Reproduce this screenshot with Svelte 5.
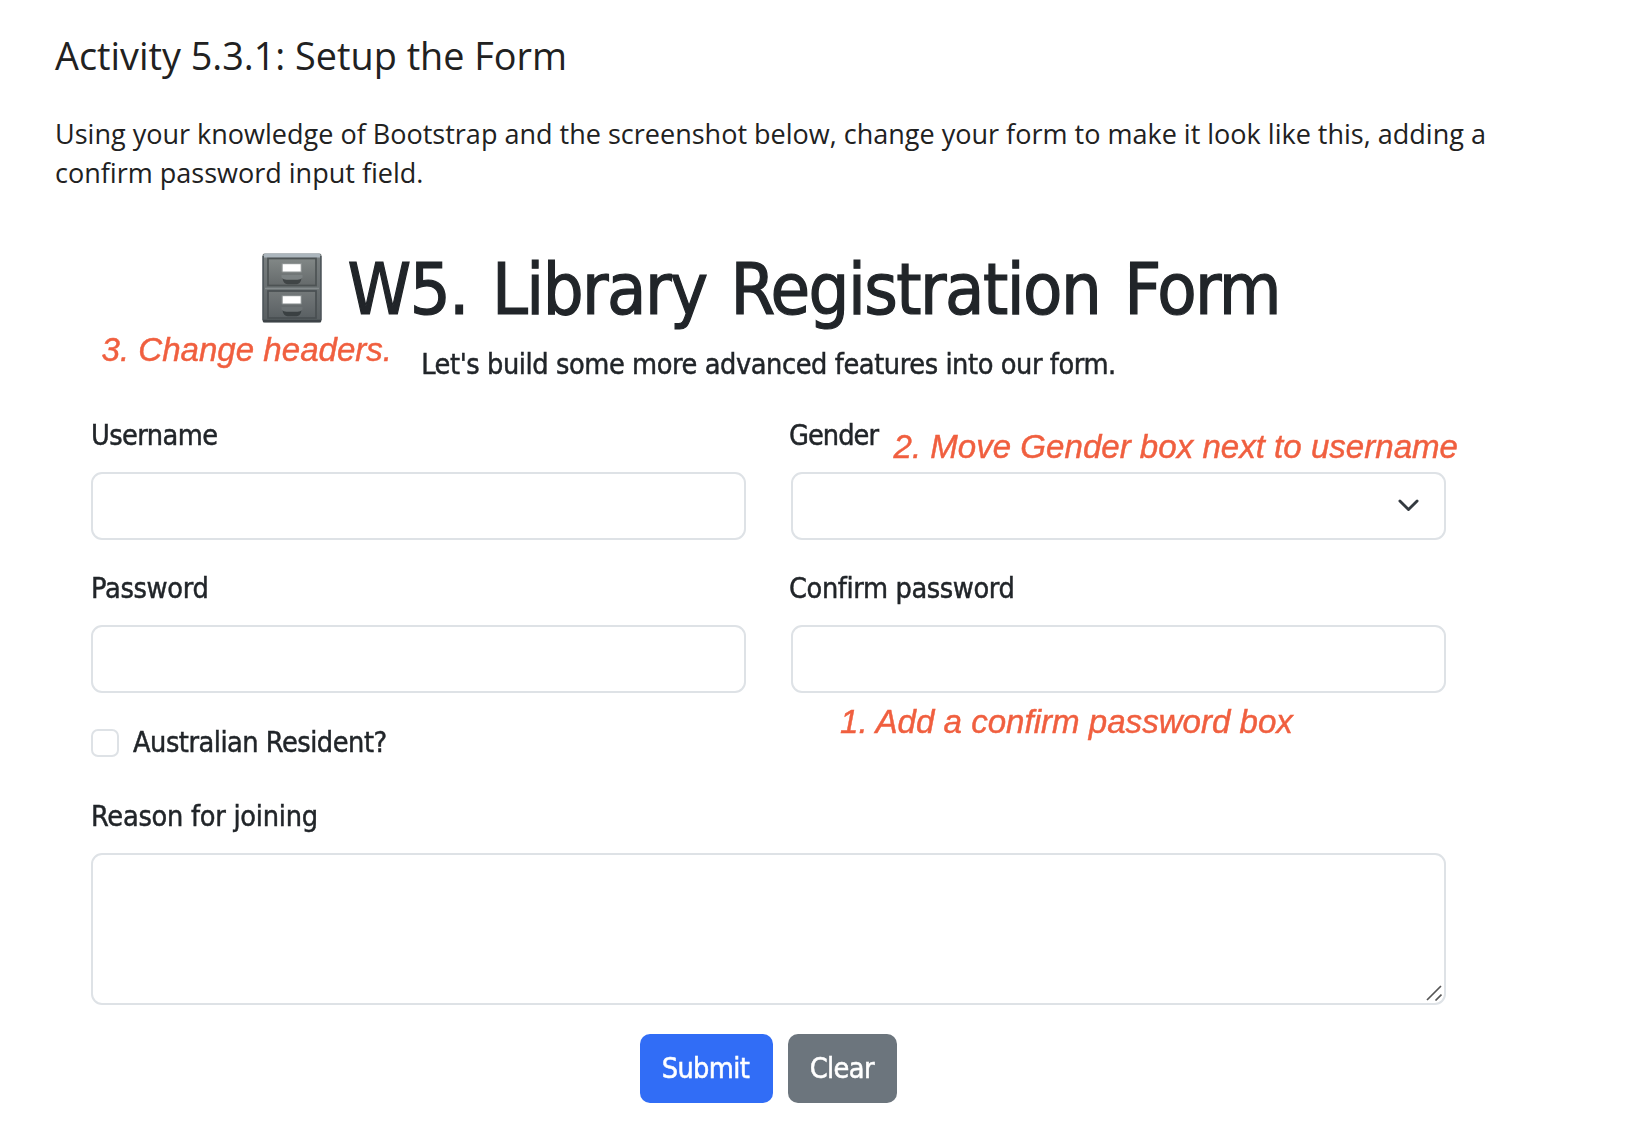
<script>
  let username = $state('');
  let gender = $state('');
  let password = $state('');
  let confirm = $state('');
  let reason = $state('');
  let resident = $state(false);
</script>

<main>
  <h2>Activity 5.3.1: Setup the Form</h2>
  <p class="intro">
    Using your knowledge of Bootstrap and the screenshot below, change your form to make it look like this, adding a
    confirm password input field.
  </p>

  <section class="figure">
    <header>
      <h1>
        <svg class="cabinet" viewBox="0 0 60 70" aria-hidden="true">
          <defs>
            <linearGradient id="body" x1="0" y1="0" x2="0" y2="1">
              <stop offset="0" stop-color="#7b8182" />
              <stop offset="1" stop-color="#585e61" />
            </linearGradient>
            <linearGradient id="drawer" x1="0" y1="0" x2="0" y2="1">
              <stop offset="0" stop-color="#828887" />
              <stop offset="1" stop-color="#656a6b" />
            </linearGradient>
            <linearGradient id="drawer-low" x1="0" y1="0" x2="0" y2="1">
              <stop offset="0" stop-color="#74797a" />
              <stop offset="1" stop-color="#5a6063" />
            </linearGradient>
          </defs>
          <rect x="0.5" y="0.5" width="59" height="69" rx="2" fill="url(#body)" />
          <path d="M2.5 .5h55l1.5 4H1z" fill="#acb6bd" />
          <path d="M1.2 3v64M58.8 3v64" stroke="#50585d" stroke-width="1.6" />
          <path d="M1 68h58" stroke="#3d4347" stroke-width="2.4" />
          <rect x="6" y="5.5" width="48" height="27" fill="url(#drawer)" stroke="#4d5354" stroke-width="1.7" />
          <rect x="6" y="38" width="48" height="27" fill="url(#drawer-low)" stroke="#494f52" stroke-width="1.7" />
          <path d="M3 35.5h54" stroke="#858b8d" stroke-width="1.4" />
          <g>
            <rect x="19.5" y="10" width="20.5" height="9.5" rx="1" fill="#8d9292" />
            <rect x="20.7" y="11.2" width="18" height="7.3" fill="#fff" />
            <path d="M20.5 25.5h19q-1 5.7-5 5.7h-9q-4 0-5-5.7z" fill="#404546" />
            <path d="M19.5 22h21v2.4q-2 2.4-5 2.4h-11q-3 0-5-2.4z" fill="#7c8283" />
          </g>
          <g transform="translate(0 32)">
            <rect x="19.5" y="10" width="20.5" height="9.5" rx="1" fill="#83898a" />
            <rect x="20.7" y="11.2" width="18" height="7.3" fill="#fff" />
            <path d="M20.5 25.5h19q-1 5.7-5 5.7h-9q-4 0-5-5.7z" fill="#3a4042" />
            <path d="M19.5 22h21v2.4q-2 2.4-5 2.4h-11q-3 0-5-2.4z" fill="#6c7274" />
          </g>
        </svg>
        <span>W5. Library Registration Form</span>
      </h1>
      <p class="lead">Let's build some more advanced features into our form.</p>
      <span class="note headers">3. Change headers.</span>
    </header>

    <form onsubmit={(e) => e.preventDefault()}>
      <div class="grid">
        <div class="field">
          <label class="t-user" for="username">Username</label>
          <input id="username" type="text" bind:value={username} />
        </div>
        <div class="field">
          <label class="t-gender" for="gender">Gender</label>
          <div class="select">
            <select id="gender" bind:value={gender}><option value=""></option></select>
            <svg viewBox="0 0 22 14" aria-hidden="true"><path d="M2 2l9 9 9-9" /></svg>
          </div>
          <span class="note gender">2. Move Gender box next to username</span>
        </div>
        <div class="field">
          <label class="t-pass" for="password">Password</label>
          <input id="password" type="password" bind:value={password} />
        </div>
        <div class="field">
          <label class="t-confirm" for="confirm">Confirm password</label>
          <input id="confirm" type="password" bind:value={confirm} />
          <span class="note confirm">1. Add a confirm password box</span>
        </div>
      </div>

      <label class="check">
        <input type="checkbox" bind:checked={resident} />
        <span>Australian Resident?</span>
      </label>

      <div class="field reason">
        <label class="t-reason" for="reason">Reason for joining</label>
        <div class="area">
          <textarea id="reason" bind:value={reason}></textarea>
          <svg viewBox="0 0 16 16" aria-hidden="true"><path d="M1 15L15 1M9.5 15.5L15.5 9.5" /></svg>
        </div>
      </div>

      <div class="actions">
        <button class="submit" type="submit">Submit</button>
        <button class="clear" type="reset">Clear</button>
      </div>
    </form>
  </section>
</main>

<style>
  :global(body) {
    background: #fff;
    overflow: hidden;
  }
  main {
    box-sizing: border-box;
    width: 1652px;
    height: 1148px;
    padding: 30.6px 56px 0 55px;
    font-family: 'Open Sans', sans-serif;
    color: #212121;
  }
  h2 {
    margin: 0 0 33px;
    font-size: 37.8px;
    line-height: 50px;
    font-weight: 400;
  }
  .intro {
    width: 1470px;
    margin: 0;
    font-size: 27.03px;
    line-height: 39.7px;
  }
  .figure {
    width: 1355px;
    margin: 54px 0 0 36px;
    font-family: 'DejaVu Sans Condensed', 'DejaVu Sans', sans-serif;
    font-stretch: condensed;
    font-size: 28.6px;
    line-height: 43px;
    color: #212529;
    letter-spacing: -0.4px;
    filter: blur(0.7px);
    -webkit-text-stroke: 0.45px currentColor;
  }
  header {
    position: relative;
  }
  h1 {
    display: flex;
    justify-content: center;
    align-items: flex-start;
    gap: 25.5px;
    margin: 0;
    padding-left: 5px;
    font-size: 71.6px;
    line-height: 86px;
    font-weight: 400;
    letter-spacing: -1.52px;
    word-spacing: 5px;
    white-space: nowrap;
    -webkit-text-stroke: 1.2px currentColor;
  }
  .cabinet {
    width: 60px;
    height: 70px;
    margin-top: 6px;
  }
  .lead {
    margin: 10px 0 0;
    text-align: center;
    letter-spacing: -0.42px;
  }
  .note {
    position: absolute;
    font: italic 33.1px/40px 'Liberation Sans', sans-serif;
    letter-spacing: 0;
    white-space: nowrap;
    color: #f05f3f;
  }
  .note.headers {
    left: 10.5px;
    top: 83px;
  }
  .note.gender {
    left: 102.5px;
    top: 13px;
  }
  .note.confirm {
    left: 49px;
    top: 134.5px;
  }
  form {
    margin-top: 28px;
  }
  .grid {
    display: grid;
    grid-template-columns: 655px 655px;
    gap: 27px 45px;
  }
  .field {
    position: relative;
    display: flex;
    flex-direction: column;
    gap: 14.5px;
  }
  .t-user {
    letter-spacing: -0.58px;
  }
  .t-gender {
    margin-left: -2px;
    letter-spacing: -0.95px;
  }
  .t-pass {
    letter-spacing: -0.3px;
  }
  .t-confirm {
    margin-left: -2px;
    letter-spacing: -0.38px;
  }
  .t-reason {
    letter-spacing: -0.26px;
  }
  input[type='text'],
  input[type='password'],
  select,
  textarea {
    box-sizing: border-box;
    display: block;
    width: 100%;
    height: 68.5px;
    margin: 0;
    padding: 10px 20px;
    border: 2px solid #dee2e6;
    border-radius: 11px;
    background: #fff;
    font: inherit;
    color: inherit;
    outline: none;
    appearance: none;
  }
  .select,
  .area {
    position: relative;
  }
  .select svg {
    position: absolute;
    right: 27.5px;
    top: 27px;
    width: 21px;
    height: 13.4px;
    fill: none;
    stroke: #343a40;
    stroke-width: 3;
    stroke-linecap: round;
    stroke-linejoin: round;
  }
  .check {
    display: flex;
    align-items: center;
    gap: 14px;
    margin-top: 28px;
    letter-spacing: -0.49px;
  }
  .check input {
    box-sizing: border-box;
    width: 28px;
    height: 28px;
    margin: 0;
    border: 2px solid #dee2e6;
    border-radius: 7px;
    appearance: none;
  }
  .reason {
    margin-top: 31px;
  }
  textarea {
    height: 152px;
    resize: none;
  }
  .area svg {
    position: absolute;
    right: 4px;
    bottom: 4px;
    width: 16px;
    height: 16px;
    fill: none;
    stroke: #555;
    stroke-width: 1.7;
  }
  .actions {
    display: flex;
    justify-content: center;
    gap: 15px;
    margin-top: 29px;
  }
  button {
    height: 69px;
    padding: 0 2px 0 0;
    border: 0;
    border-radius: 10px;
    font: inherit;
    letter-spacing: -0.62px;
    color: #fff;
    -webkit-text-stroke: 0.5px #fff;
  }
  .submit {
    width: 133.5px;
    background: #316df6;
  }
  .clear {
    width: 109px;
    background: #6c757d;
  }
</style>
